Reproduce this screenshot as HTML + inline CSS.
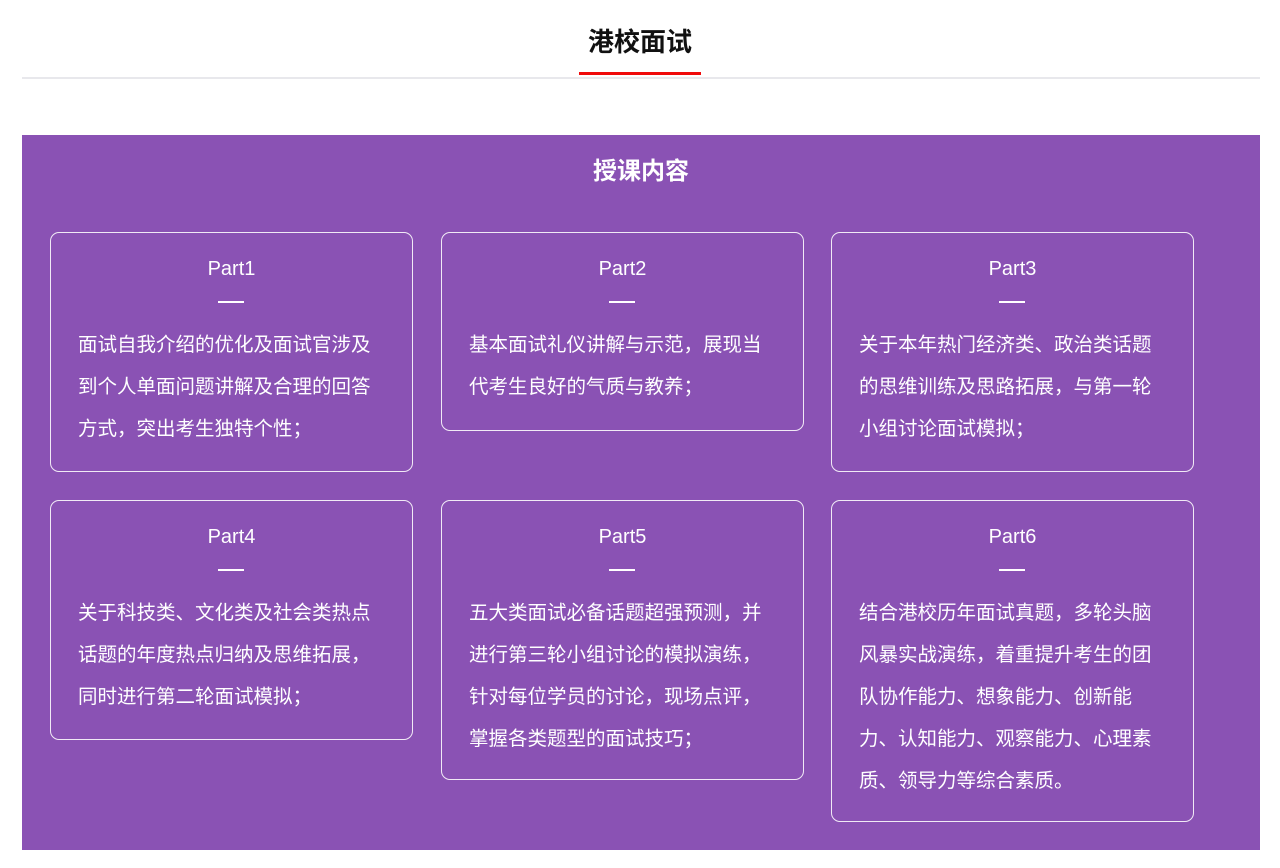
<!DOCTYPE html>
<html><head><meta charset="utf-8"><style>
body{margin:0;background:#fff;width:1280px;height:868px;overflow:hidden;font-family:"Liberation Sans","Noto Sans CJK SC",sans-serif;}
.t{position:absolute;left:0;width:1280px;top:24px;text-align:center;font-size:26px;font-weight:bold;color:#111;line-height:36px;}
.red{position:absolute;left:579px;top:72px;width:122px;height:3px;background:#f00a0a;}
.gray{position:absolute;left:22px;top:77px;width:1238px;height:2px;background:#e8e8ec;}
.box{position:absolute;left:22px;top:135px;width:1238px;height:715px;background:#8a52b4;}
.h{position:absolute;left:0;width:1238px;top:20px;text-align:center;color:#fff;font-size:24px;font-weight:bold;line-height:34px;}
.c{position:absolute;width:363px;border:1.5px solid #f1eaf6;border-radius:9px;box-sizing:border-box;color:#fff;}
.p{position:absolute;top:24px;left:0;width:100%;text-align:center;font-size:20px;line-height:24px;}
.d{position:absolute;top:68px;left:167px;width:26px;height:2px;background:#fff;}
.x{position:absolute;top:91px;left:27px;width:296px;font-size:19.5px;line-height:42px;}
</style></head><body>
<div class="t">港校面试</div><div class="red"></div><div class="gray"></div>
<div class="box"><div class="h">授课内容</div>
<div class="c" style="left:28px;top:97px;height:240px"><div class="p">Part1</div><div class="d"></div><div class="x">面试自我介绍的优化及面试官涉及到个人单面问题讲解及合理的回答方式，突出考生独特个性；</div></div>
<div class="c" style="left:419px;top:97px;height:199px"><div class="p">Part2</div><div class="d"></div><div class="x">基本面试礼仪讲解与示范，展现当代考生良好的气质与教养；</div></div>
<div class="c" style="left:809px;top:97px;height:240px"><div class="p">Part3</div><div class="d"></div><div class="x">关于本年热门经济类、政治类话题的思维训练及思路拓展，与第一轮小组讨论面试模拟；</div></div>
<div class="c" style="left:28px;top:365px;height:240px"><div class="p">Part4</div><div class="d"></div><div class="x">关于科技类、文化类及社会类热点话题的年度热点归纳及思维拓展，同时进行第二轮面试模拟；</div></div>
<div class="c" style="left:419px;top:365px;height:280px"><div class="p">Part5</div><div class="d"></div><div class="x">五大类面试必备话题超强预测，并进行第三轮小组讨论的模拟演练，针对每位学员的讨论，现场点评，掌握各类题型的面试技巧；</div></div>
<div class="c" style="left:809px;top:365px;height:322px"><div class="p">Part6</div><div class="d"></div><div class="x">结合港校历年面试真题，多轮头脑风暴实战演练，着重提升考生的团队协作能力、想象能力、创新能力、认知能力、观察能力、心理素质、领导力等综合素质。</div></div>
</div>
</body></html>
